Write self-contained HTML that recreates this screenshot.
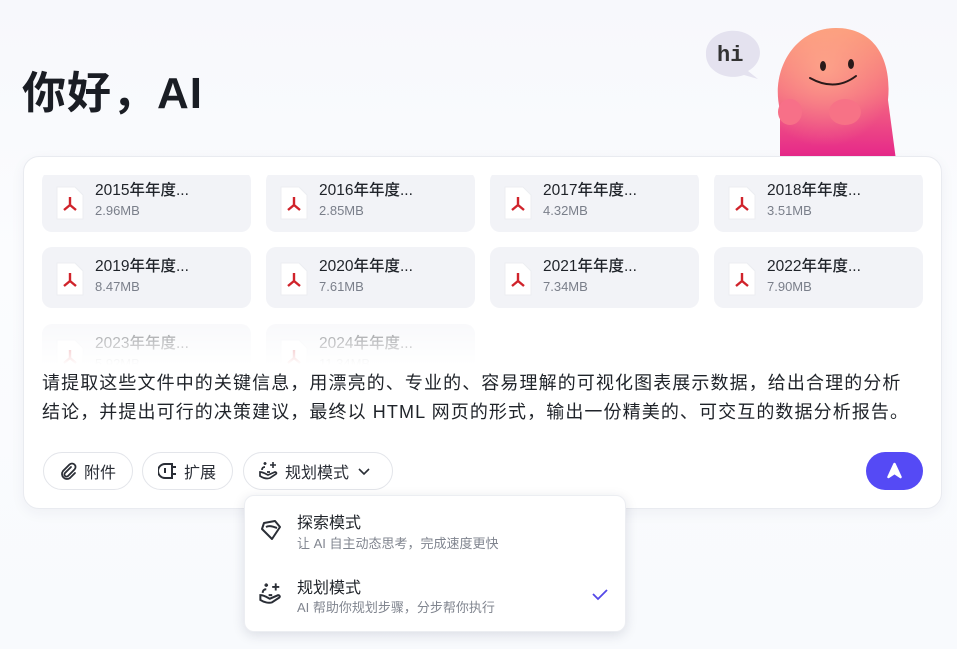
<!DOCTYPE html>
<html><head><meta charset="utf-8"><style>
*{margin:0;padding:0;box-sizing:border-box}
body{width:957px;height:649px;overflow:hidden;background:linear-gradient(180deg,#f7f8fc 0%,#fbfcfe 40%,#f8fafd 100%);font-family:"Liberation Sans","Noto Sans CJK SC",sans-serif;position:relative;color:#1f2329}
h1{position:absolute;left:22px;top:57px;font-size:44px;font-weight:700;color:#1a1d24;letter-spacing:1px}
.card{position:absolute;left:23px;top:156px;width:919px;height:353px;background:#fff;border:1px solid #e9ebf0;border-radius:16px;box-shadow:0 4px 14px rgba(30,40,80,.05)}
.files{position:absolute;left:18px;top:18px;width:890px;height:190px;overflow:hidden}
.tile{position:absolute;width:209px;height:61px;background:#f2f3f7;border-radius:10px}
.tile .ic{position:absolute;left:13px;top:14px;width:30px;height:36px}
.tile .n{position:absolute;left:53px;top:7px;font-size:15.5px;color:#1f2329;font-weight:500}
.tile .s{position:absolute;left:53px;top:32px;font-size:13px;color:#7a7f8a}
.fade{position:absolute;left:0;top:145px;width:890px;height:45px;background:linear-gradient(180deg,rgba(255,255,255,.45),#fff)}
.txt{position:absolute;left:18px;top:212px;width:900px;font-size:18px;letter-spacing:1.1px;line-height:29px;color:#1f2329;white-space:nowrap}
.btn{position:absolute;top:295px;height:38px;border:1px solid #e3e5ea;border-radius:19px;font-size:16px;display:flex;align-items:center;color:#2a2e36}
.send{position:absolute;left:842px;top:295px;width:57px;height:38px;border-radius:19px;background:#554af5}
.dd{position:absolute;left:244px;top:495px;width:382px;height:137px;background:#fff;border-radius:10px;box-shadow:0 3px 12px rgba(20,30,60,.13);border:1px solid #eceef2}
.dd .t{position:absolute;left:52px;font-size:16px;color:#1f2329}
.dd .d{position:absolute;left:52px;font-size:13px;color:#80858f}
</style></head><body>
<h1>你好，AI</h1>
<svg style="position:absolute;left:700px;top:20px" width="240" height="140" viewBox="0 0 240 140">
<defs><linearGradient id="g" x1="0" y1="0" x2="0" y2="1"><stop offset="0" stop-color="#fb9a78"/><stop offset=".5" stop-color="#f46a80"/><stop offset="1" stop-color="#e5248a"/></linearGradient>
<radialGradient id="h" cx=".4" cy=".3" r=".6"><stop offset="0" stop-color="#ffb08e" stop-opacity=".7"/><stop offset="1" stop-color="#ffb08e" stop-opacity="0"/></radialGradient></defs>
<path d="M6 34 a27 22 0 1 1 42 17 l10 8 l-14 -4 a27 22 0 0 1 -38 -21z" fill="#e4e2ef"/>
<text x="17" y="41" font-family="Liberation Mono,monospace" font-size="22" font-weight="700" fill="#333">hi</text>
<path d="M80 140 L80 90 C70 50 95 8 136 8 C175 8 192 40 188 80 L196 140 Z" fill="url(#g)"/>
<path d="M80 140 L80 90 C70 50 95 8 136 8 C175 8 192 40 188 80 L196 140 Z" fill="url(#h)"/>
<ellipse cx="90" cy="92" rx="12" ry="13" fill="#f77088"/>
<ellipse cx="145" cy="92" rx="16" ry="13" fill="#f77286"/>
<ellipse cx="123" cy="46" rx="3" ry="5" fill="#2a1a1a"/><ellipse cx="151" cy="44" rx="3" ry="5" fill="#2a1a1a"/>
<path d="M110 58 Q135 72 156 56" stroke="#2a1a1a" stroke-width="2" fill="none" stroke-linecap="round"/>
</svg>
<div class="card">
<div class="files">
<div class="tile" style="left:0;top:-4px"><svg class="ic" viewBox="0 0 30 36"><path d="M2 2h18l8 8v24H2z" fill="#fff" stroke="#eceef2"/><path d="M15 12v8M15 20l-6 5M15 20l6 5" stroke="#d0232b" stroke-width="2.4" fill="none"/></svg><div class="n">2015年年度...</div><div class="s">2.96MB</div></div>
<div class="tile" style="left:224px;top:-4px"><svg class="ic" viewBox="0 0 30 36"><path d="M2 2h18l8 8v24H2z" fill="#fff" stroke="#eceef2"/><path d="M15 12v8M15 20l-6 5M15 20l6 5" stroke="#d0232b" stroke-width="2.4" fill="none"/></svg><div class="n">2016年年度...</div><div class="s">2.85MB</div></div>
<div class="tile" style="left:448px;top:-4px"><svg class="ic" viewBox="0 0 30 36"><path d="M2 2h18l8 8v24H2z" fill="#fff" stroke="#eceef2"/><path d="M15 12v8M15 20l-6 5M15 20l6 5" stroke="#d0232b" stroke-width="2.4" fill="none"/></svg><div class="n">2017年年度...</div><div class="s">4.32MB</div></div>
<div class="tile" style="left:672px;top:-4px"><svg class="ic" viewBox="0 0 30 36"><path d="M2 2h18l8 8v24H2z" fill="#fff" stroke="#eceef2"/><path d="M15 12v8M15 20l-6 5M15 20l6 5" stroke="#d0232b" stroke-width="2.4" fill="none"/></svg><div class="n">2018年年度...</div><div class="s">3.51MB</div></div>
<div class="tile" style="left:0;top:72px"><svg class="ic" viewBox="0 0 30 36"><path d="M2 2h18l8 8v24H2z" fill="#fff" stroke="#eceef2"/><path d="M15 12v8M15 20l-6 5M15 20l6 5" stroke="#d0232b" stroke-width="2.4" fill="none"/></svg><div class="n">2019年年度...</div><div class="s">8.47MB</div></div>
<div class="tile" style="left:224px;top:72px"><svg class="ic" viewBox="0 0 30 36"><path d="M2 2h18l8 8v24H2z" fill="#fff" stroke="#eceef2"/><path d="M15 12v8M15 20l-6 5M15 20l6 5" stroke="#d0232b" stroke-width="2.4" fill="none"/></svg><div class="n">2020年年度...</div><div class="s">7.61MB</div></div>
<div class="tile" style="left:448px;top:72px"><svg class="ic" viewBox="0 0 30 36"><path d="M2 2h18l8 8v24H2z" fill="#fff" stroke="#eceef2"/><path d="M15 12v8M15 20l-6 5M15 20l6 5" stroke="#d0232b" stroke-width="2.4" fill="none"/></svg><div class="n">2021年年度...</div><div class="s">7.34MB</div></div>
<div class="tile" style="left:672px;top:72px"><svg class="ic" viewBox="0 0 30 36"><path d="M2 2h18l8 8v24H2z" fill="#fff" stroke="#eceef2"/><path d="M15 12v8M15 20l-6 5M15 20l6 5" stroke="#d0232b" stroke-width="2.4" fill="none"/></svg><div class="n">2022年年度...</div><div class="s">7.90MB</div></div>
<div class="tile" style="left:0;top:149px"><svg class="ic" viewBox="0 0 30 36"><path d="M2 2h18l8 8v24H2z" fill="#fff" stroke="#eceef2"/><path d="M15 12v8M15 20l-6 5M15 20l6 5" stroke="#d0232b" stroke-width="2.4" fill="none"/></svg><div class="n">2023年年度...</div><div class="s">5.92MB</div></div>
<div class="tile" style="left:224px;top:149px"><svg class="ic" viewBox="0 0 30 36"><path d="M2 2h18l8 8v24H2z" fill="#fff" stroke="#eceef2"/><path d="M15 12v8M15 20l-6 5M15 20l6 5" stroke="#d0232b" stroke-width="2.4" fill="none"/></svg><div class="n">2024年年度...</div><div class="s">11.34MB</div></div>
<div class="fade"></div>
</div>
<div class="txt">请提取这些文件中的关键信息，用漂亮的、专业的、容易理解的可视化图表展示数据，给出合理的分析<br>结论，并提出可行的决策建议，最终以 HTML 网页的形式，输出一份精美的、可交互的数据分析报告。</div>
<div class="btn" style="left:19px;width:90px;padding-left:14px"><svg width="20" height="20" viewBox="0 0 20 20" style="margin-right:6px"><path d="M13 6l-6 6a2 2 0 0 0 3 3l6.5-6.5a3.5 3.5 0 0 0-5-5L5 10a5 5 0 0 0 7 7l5-5" stroke="#2a2e36" stroke-width="1.8" fill="none" stroke-linecap="round"/></svg>附件</div>
<div class="btn" style="left:118px;width:91px;padding-left:15px"><svg width="22" height="20" viewBox="0 0 22 20" style="margin-right:4px"><path d="M14 3H7a5 5 0 0 0 0 14h7z" stroke="#2a2e36" stroke-width="2" fill="none"/><path d="M7 7v5M14 6h4M14 13h4" stroke="#2a2e36" stroke-width="2"/></svg>扩展</div>
<div class="btn" style="left:219px;width:150px;padding-left:14px"><svg width="22" height="20" viewBox="0 0 22 20" style="margin-right:5px"><path d="M2 11c3 0 6 2 8 3l7-3c1 0 2 1 1 2l-6 4c-3 1-7 0-10-2z" stroke="#2a2e36" stroke-width="1.7" fill="none"/><path d="M4 9c0-2 1-3 3-3M9 11h3" stroke="#2a2e36" stroke-width="1.7" fill="none"/><path d="M15 1v6M12 4h6M7 1v3M5.5 2.5h3" stroke="#2a2e36" stroke-width="1.6"/></svg>规划模式<svg width="14" height="10" viewBox="0 0 14 10" style="margin-left:8px"><path d="M2 3l5 5 5-5" stroke="#2a2e36" stroke-width="1.6" fill="none"/></svg></div>
<div class="send"><svg width="57" height="38" viewBox="0 0 57 38"><path d="M28.5 12l-6 13 6-4 6 4z" fill="#fff" stroke="#fff" stroke-width="2.5" stroke-linejoin="round"/></svg></div>
</div>
<div class="dd">
<svg style="position:absolute;left:14px;top:22px" width="24" height="24" viewBox="0 0 24 24"><path d="M5 5l11-2 5 6-8 12L3 11z" stroke="#2a2e36" stroke-width="2" fill="none" stroke-linejoin="round"/><path d="M7 9c4-2 8 0 11 1" stroke="#2a2e36" stroke-width="2" fill="none"/></svg>
<div class="t" style="top:13px">探索模式</div><div class="d" style="top:37px">让 AI 自主动态思考，完成速度更快</div>
<svg style="position:absolute;left:13px;top:86px" width="26" height="24" viewBox="0 0 22 20"><path d="M2 11c3 0 6 2 8 3l7-3c1 0 2 1 1 2l-6 4c-3 1-7 0-10-2z" stroke="#2a2e36" stroke-width="1.7" fill="none"/><path d="M4 9c0-2 1-3 3-3M9 11h3" stroke="#2a2e36" stroke-width="1.7" fill="none"/><path d="M15 1v6M12 4h6M7 1v3M5.5 2.5h3" stroke="#2a2e36" stroke-width="1.6"/></svg>
<div class="t" style="top:78px">规划模式</div><div class="d" style="top:101px">AI 帮助你规划步骤，分步帮你执行</div>
<svg style="position:absolute;left:346px;top:92px" width="18" height="14" viewBox="0 0 18 14"><path d="M2 6l5 5 9-9" stroke="#5448e8" stroke-width="1.8" fill="none"/></svg>
</div>
</body></html>
